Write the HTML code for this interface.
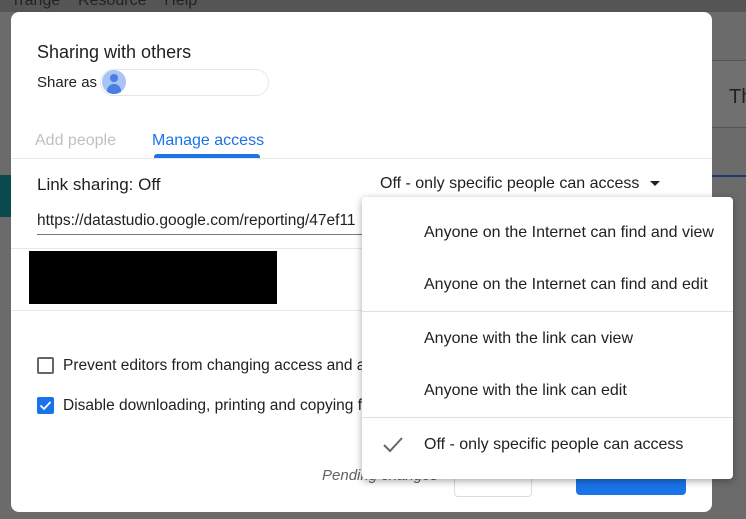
<!DOCTYPE html>
<html><head><style>
body{margin:0;width:746px;height:519px;background:#6b6b6b;position:relative;overflow:hidden;font-family:"Liberation Sans",sans-serif;color:#202124}
.a{position:absolute}
.dlg{left:11px;top:12px;width:701px;height:500px;background:#fff;border-radius:8px}
.t{font-size:16px;white-space:nowrap}
.menu{left:362px;top:197px;width:371px;height:282px;background:#fff;border-radius:4px;box-shadow:0 2px 8px rgba(0,0,0,.35)}
.mi{position:absolute;left:62px;font-size:16px;color:#202124;white-space:nowrap}
</style></head><body>
<div class="a" style="left:0;top:0;width:746px;height:12px;background:#555"></div>
<div class="a t" style="left:14px;top:-8px;color:#222">rrange&nbsp;&nbsp;&nbsp;&nbsp;Resource&nbsp;&nbsp;&nbsp;&nbsp;Help</div>
<div class="a" style="left:712px;top:60px;width:34px;height:66px;background:#707070;border-top:1px solid #555;border-bottom:1px solid #555"></div>
<div class="a t" style="left:729px;top:86px;font-size:20px;color:#222">Th</div>
<div class="a" style="left:712px;top:175px;width:34px;height:2px;background:#1a3a6a"></div>
<div class="a" style="left:0;top:175px;width:11px;height:42px;background:#0b4a4c"></div>
<div class="a dlg"></div>
<div class="a t" style="left:37px;top:42px;font-size:18px">Sharing with others</div>
<div class="a t" style="left:37px;top:74px;font-size:15px">Share as</div>
<div class="a" style="left:100px;top:69px;width:167px;height:25px;border:1px solid #e6e6e6;border-radius:14px"></div>
<div class="a" style="left:102px;top:70px;width:24px;height:24px;border-radius:50%;background:#a8c4f5;overflow:hidden">
<div class="a" style="left:8px;top:4px;width:8px;height:8px;border-radius:50%;background:#4a7ee0"></div>
<div class="a" style="left:5px;top:14px;width:14px;height:10px;border-radius:7px 7px 0 0;background:#4a7ee0"></div></div>
<div class="a t" style="left:35px;top:132px;color:#bdc1c6">Add people</div>
<div class="a t" style="left:152px;top:132px;color:#1a73e8">Manage access</div>
<div class="a" style="left:154px;top:154px;width:106px;height:4px;background:#1a73e8;border-radius:3px 3px 0 0"></div>
<div class="a" style="left:11px;top:158px;width:701px;height:1px;background:#e8e8e8"></div>
<div class="a t" style="left:37px;top:175px;font-size:17px">Link sharing: Off</div>
<div class="a t" style="left:380px;top:175px">Off - only specific people can access</div>
<div class="a" style="left:650px;top:181px;width:0;height:0;border-left:5px solid transparent;border-right:5px solid transparent;border-top:5px solid #202124"></div>
<div class="a t" style="left:37px;top:212px;font-size:15.5px">https://datastudio.google.com/reporting/47ef11</div>
<div class="a" style="left:362px;top:205px;width:10px;height:30px;background:#fff"></div>
<div class="a" style="left:37px;top:234px;width:325px;height:1px;background:#777"></div>
<div class="a" style="left:11px;top:248px;width:351px;height:1px;background:#e8e8e8"></div>
<div class="a" style="left:29px;top:251px;width:248px;height:53px;background:#000"></div>
<div class="a" style="left:11px;top:310px;width:351px;height:1px;background:#e8e8e8"></div>
<div class="a" style="left:37px;top:357px;width:13px;height:13px;border:2px solid #666;border-radius:2px"></div>
<div class="a t" style="left:63px;top:357px;width:299px;overflow:hidden;font-size:15.5px">Prevent editors from changing access and add</div>
<div class="a" style="left:37px;top:397px;width:17px;height:17px;background:#1a73e8;border-radius:2px"><svg width="17" height="17"><path d="M3.5 8.5l3.5 3.5 6.5-7" stroke="#fff" stroke-width="1.8" fill="none"/></svg></div>
<div class="a t" style="left:63px;top:397px;width:299px;overflow:hidden;font-size:15.5px">Disable downloading, printing and copying for</div>
<div class="a t" style="left:322px;top:467px;font-style:italic;color:#5f6368;font-size:15px">Pending changes</div>
<div class="a" style="left:454px;top:466px;width:76px;height:29px;border:1px solid #dadce0;border-radius:4px;background:#fff"></div>
<div class="a" style="left:576px;top:466px;width:110px;height:29px;background:#1a73e8;border-radius:4px"></div>
<div class="a menu">
<div class="mi" style="top:27px">Anyone on the Internet can find and view</div>
<div class="mi" style="top:79px">Anyone on the Internet can find and edit</div>
<div class="a" style="left:0;top:114px;width:371px;height:1px;background:#e0e0e0"></div>
<div class="mi" style="top:133px">Anyone with the link can view</div>
<div class="mi" style="top:185px">Anyone with the link can edit</div>
<div class="a" style="left:0;top:220px;width:371px;height:1px;background:#e0e0e0"></div>
<svg class="a" style="left:20px;top:238px" width="22" height="20"><path d="M2 10l6 6L20 3" stroke="#666" stroke-width="2" fill="none"/></svg>
<div class="mi" style="top:239px">Off - only specific people can access</div>
</div>
</body></html>
